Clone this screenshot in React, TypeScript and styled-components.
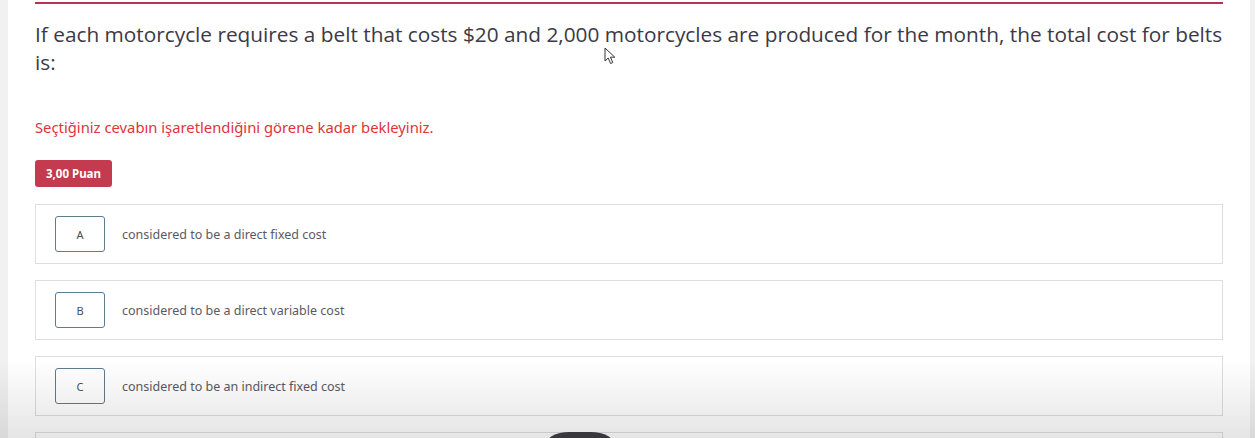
import React from 'react'
import styled, { createGlobalStyle } from 'styled-components'

const GlobalStyle = createGlobalStyle`
  html, body {
    margin: 0;
    padding: 0;
    background: #f1f1f1;
    overflow: hidden;
  }
  body {
    font-family: "Noto Sans", "Lato", sans-serif;
  }
`

const options = [
  { letter: 'A', text: 'considered to be a direct fixed cost' },
  { letter: 'B', text: 'considered to be a direct variable cost' },
  { letter: 'C', text: 'considered to be an indirect fixed cost' },
  { letter: '', text: '' },
]

const App: React.FC = () => {
  return (
    <>
      <GlobalStyle />
      <StyledPage>
        <StyledPanel>
          <StyledQuestion>
            If each motorcycle requires a belt that costs $20 and 2,000 motorcycles are produced for the month, the total cost for belts is:
          </StyledQuestion>
          <StyledWarning>Seçtiğiniz cevabın işaretlendiğini görene kadar bekleyiniz.</StyledWarning>
          <StyledBadge>3,00 Puan</StyledBadge>
          <StyledOptions>
            {options.map((o, i) => (
              <StyledOption key={i}>
                <StyledLetter>{o.letter}</StyledLetter>
                <StyledOptionText>{o.text}</StyledOptionText>
              </StyledOption>
            ))}
          </StyledOptions>
        </StyledPanel>
      </StyledPage>
      <StyledShade />
      <StyledPill />
      <StyledCursor width="14" height="18" viewBox="0 0 14 18">
        <path d="M1 1 L1 14 L4.2 11 L6.6 16.5 L8.8 15.5 L6.4 10.2 L10.8 10.2 Z" fill="#fff" stroke="#333" strokeWidth="1" strokeLinejoin="round" />
      </StyledCursor>
    </>
  )
}

const StyledPage = styled.div`
  height: 438px;
  margin: 0 5px 0 8px;
  background: #fff;
  overflow: hidden;
`

const StyledPanel = styled.div`
  margin: 2px 27px 0;
  border-top: 2px solid #b33550;
  padding-top: 16px;
`

const StyledQuestion = styled.div`
  font-family: "Open Sans", sans-serif;
  font-size: 20.8px;
  line-height: 28px;
  color: #3a3a46;
`

const StyledWarning = styled.div`
  margin-top: 42px;
  font-size: 14.8px;
  line-height: 18px;
  color: #e0343a;
`

const StyledBadge = styled.div`
  display: inline-flex;
  align-items: center;
  justify-content: center;
  margin-top: 24px;
  width: 77px;
  height: 27px;
  box-sizing: border-box;
  border-radius: 3px;
  background: #c43a4e;
  color: #fff;
  font-size: 11.5px;
  font-weight: 700;
`

const StyledOptions = styled.div`
  display: flex;
  flex-direction: column;
  gap: 16px;
  margin-top: 17px;
`

const StyledOption = styled.div`
  display: flex;
  align-items: center;
  gap: 17px;
  height: 60px;
  box-sizing: border-box;
  padding-left: 19px;
  border: 1px solid #dedede;
  background: #fff;
`

const StyledLetter = styled.div`
  display: flex;
  align-items: center;
  justify-content: center;
  width: 50px;
  height: 36px;
  box-sizing: border-box;
  border: 1px solid #5f7b90;
  border-radius: 3px;
  font-size: 11px;
  color: #4a4a55;
`

const StyledOptionText = styled.div`
  font-size: 12.5px;
  color: #5a5a64;
`

const StyledShade = styled.div`
  position: fixed;
  left: 0;
  right: 0;
  top: 360px;
  bottom: 0;
  background: linear-gradient(to bottom, rgba(0, 0, 0, 0), rgba(0, 0, 0, 0.1));
  pointer-events: none;
`

const StyledPill = styled.div`
  position: fixed;
  left: 545px;
  top: 432px;
  width: 70px;
  height: 30px;
  border-radius: 24px / 14px;
  background: #38383d;
`

const StyledCursor = styled.svg`
  position: fixed;
  left: 604px;
  top: 47px;
`

export default App
